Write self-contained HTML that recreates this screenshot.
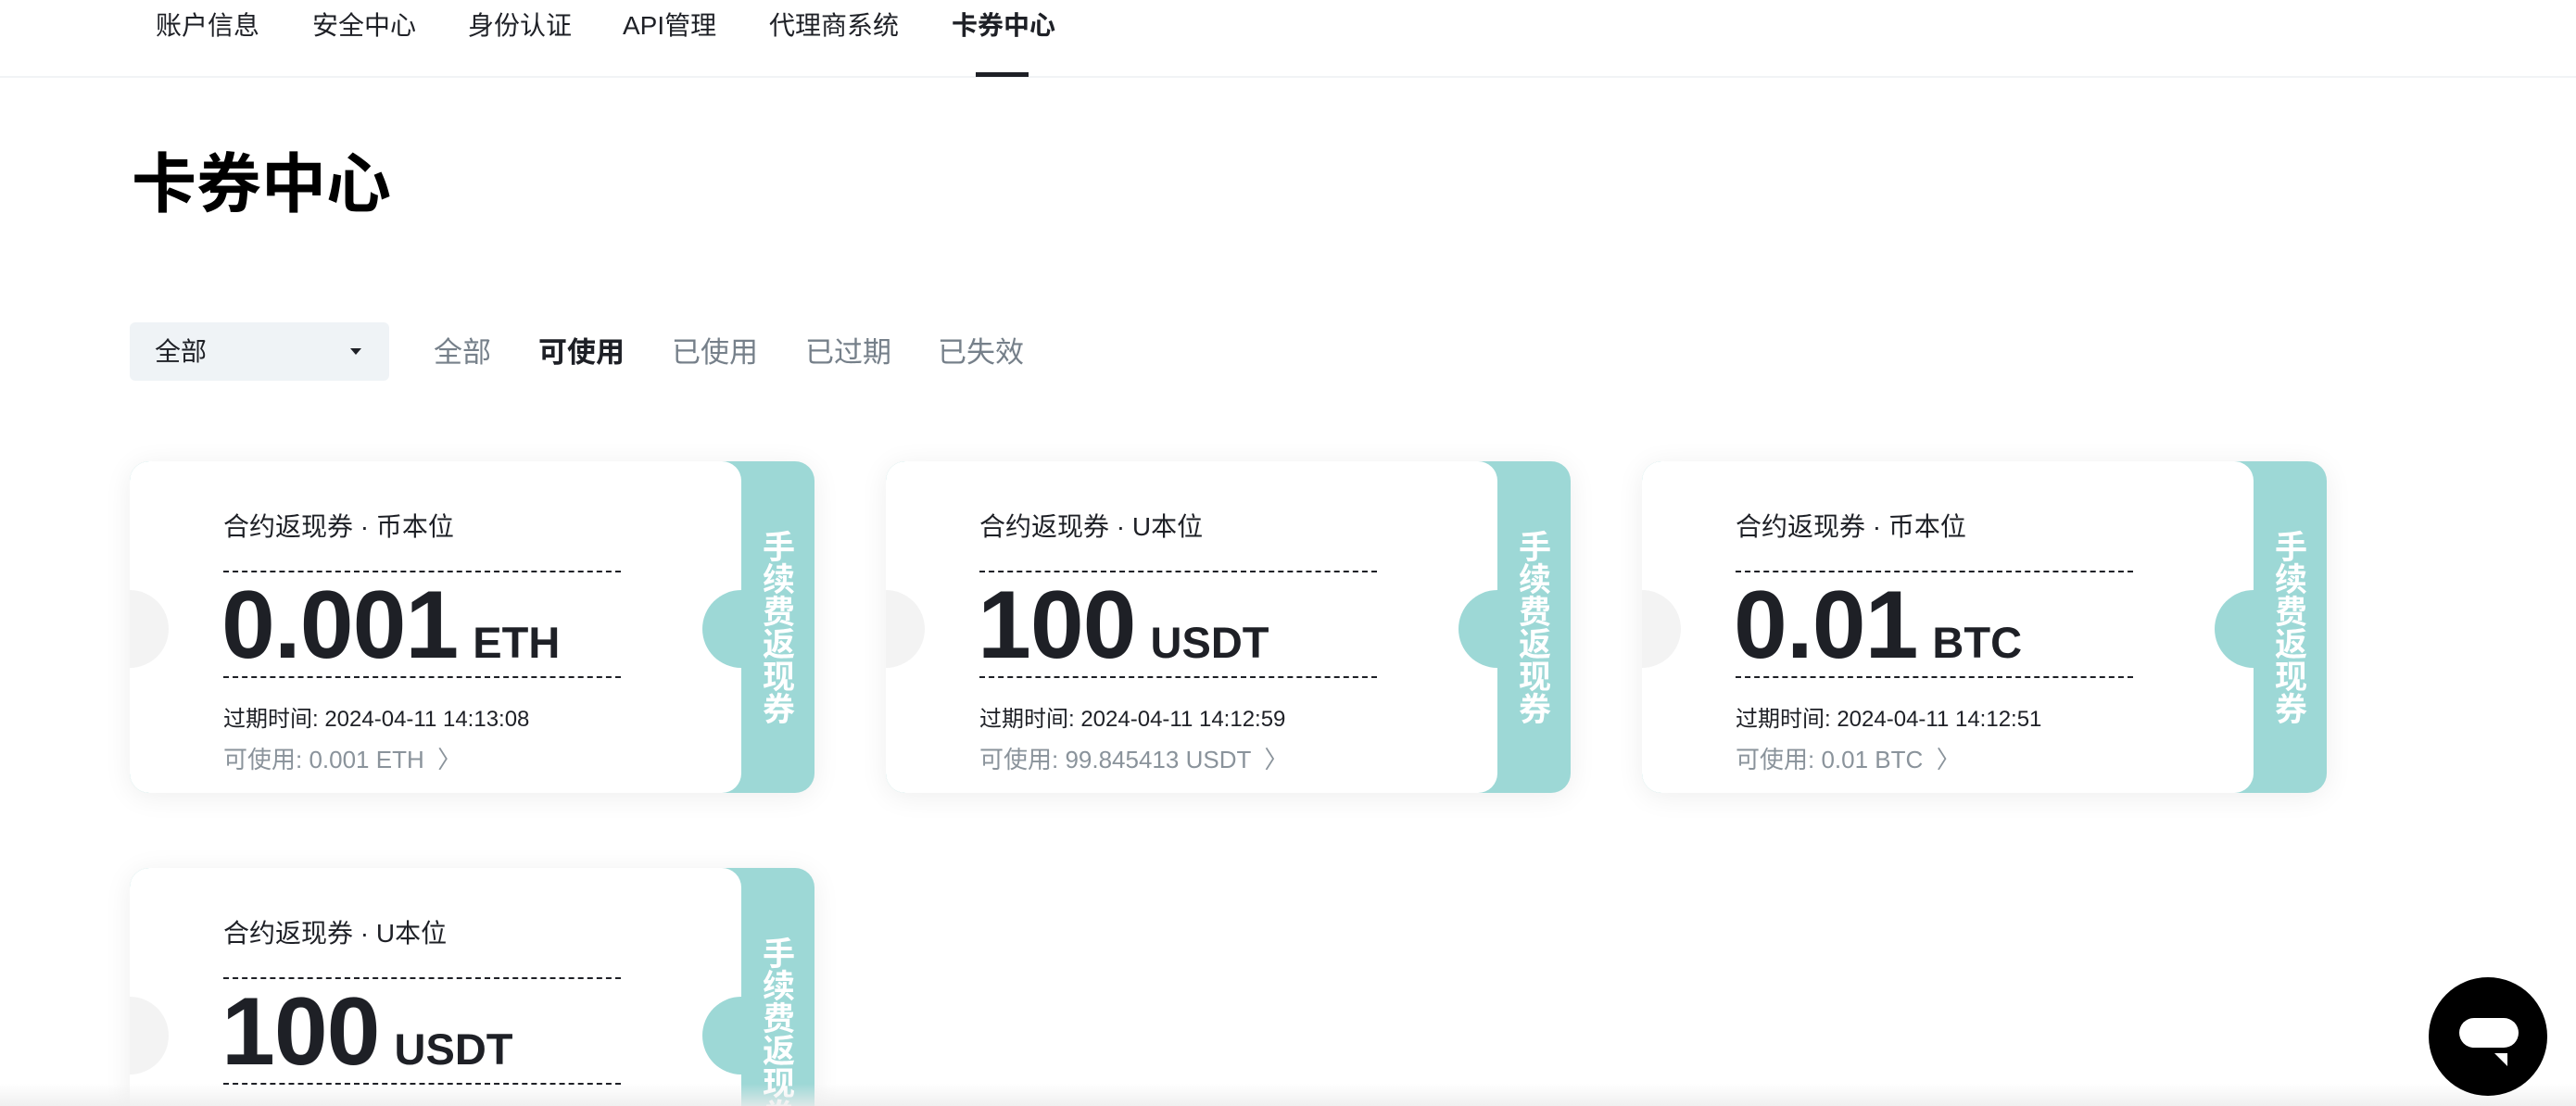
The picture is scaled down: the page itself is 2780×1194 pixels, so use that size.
<!DOCTYPE html>
<html style="width:2780px;height:1194px;overflow:hidden"><head><meta charset="utf-8"><style>
*{margin:0;padding:0;box-sizing:border-box}
body{width:2780px;height:1194px;overflow:hidden;background:#fff;font-family:"Liberation Sans","Noto Sans CJK SC",sans-serif;color:#1e2026;position:relative}
.nav{position:absolute;top:0;left:0;width:2780px;height:84px;border-bottom:2px solid #f1f3f5}
.nav span{position:absolute;top:10px;font-size:28px;line-height:36px;color:#1e2026}
.ul{position:absolute;left:1053px;top:78px;width:57px;height:5px;background:#1e2026}
h1{position:absolute;left:142px;top:157px;font-size:70px;font-weight:bold;line-height:84px;color:#000}
.sel{position:absolute;left:140px;top:348px;width:280px;height:63px;background:#eff3f6;border-radius:6px}
.sel span{position:absolute;left:27px;top:14px;font-size:28px;line-height:36px}
.sel i{position:absolute;left:238px;top:28px;border-left:6px solid transparent;border-right:6px solid transparent;border-top:7px solid #1e2026}
.tab{position:absolute;top:361px;font-size:31px;line-height:40px;color:#76808a}
.card{position:absolute;width:739px;height:358px;border-radius:21px;background:#9dd8d6;box-shadow:0 4px 30px rgba(0,0,0,.07);overflow:hidden}
.w{position:absolute;left:0;top:0;width:660px;height:358px;background:#fff;border-radius:21px}
.nl{position:absolute;left:-42px;top:139px;width:84px;height:84px;border-radius:50%;background:#f3f3f3}
.nr{position:absolute;left:618px;top:139px;width:84px;height:84px;border-radius:50%;background:#9dd8d6}
.t{position:absolute;left:101px;top:53px;font-size:28px;line-height:36px}
.d{position:absolute;left:101px;width:429px;border-top:2px dashed #1e2026}
.num{position:absolute;left:99px;top:117px;height:120px;display:flex;align-items:baseline;white-space:nowrap;font-weight:bold}
.num b{font-size:104px;line-height:120px;letter-spacing:-1px}
.num em{font-style:normal;font-size:47px;margin-left:16px}
.e{position:absolute;left:101px;top:264px;font-size:24px;line-height:30px}
.a{position:absolute;left:101px;top:306px;font-size:26px;line-height:32px;color:#8a939b}
.v{position:absolute;left:678px;top:74px;height:230px;white-space:nowrap;writing-mode:vertical-rl;font-size:35px;font-weight:bold;color:#fff;line-height:38px}
.chat{position:absolute;left:2621px;top:1055px;width:128px;height:128px;border-radius:50%;background:#000}
.chat .b{position:absolute;left:33px;top:44px;width:64px;height:32px;border-radius:16px;background:#fff}
.chat .tr{position:absolute;left:71px;top:82px;border-left:14px solid transparent;border-top:14px solid #fff}
.bot{position:absolute;left:0;top:1170px;width:2780px;height:24px;background:linear-gradient(rgba(240,240,240,0),rgba(236,236,236,.8))}
</style></head><body>
<div class="nav">
<span style="left:168px">账户信息</span>
<span style="left:337px">安全中心</span>
<span style="left:505px">身份认证</span>
<span style="left:672px">API管理</span>
<span style="left:830px">代理商系统</span>
<span style="left:1027px;font-weight:bold">卡券中心</span>
<div class="ul"></div>
</div>
<h1>卡券中心</h1>
<div class="sel"><span>全部</span><i></i></div>
<div class="tab" style="left:468px">全部</div>
<div class="tab" style="left:581px;color:#1e2026;font-weight:bold">可使用</div>
<div class="tab" style="left:725px">已使用</div>
<div class="tab" style="left:869px">已过期</div>
<div class="tab" style="left:1012px">已失效</div>

<div class="card" style="left:140px;top:498px"><div class="w"></div><div class="nl"></div><div class="nr"></div>
<div class="t">合约返现券 · 币本位</div><div class="d" style="top:118px"></div>
<div class="num"><b>0.001</b><em>ETH</em></div><div class="d" style="top:232px"></div>
<div class="e">过期时间: 2024-04-11 14:13:08</div><div class="a">可使用: 0.001 ETH &nbsp;〉</div>
<div class="v">手续费返现券</div></div>

<div class="card" style="left:956px;top:498px"><div class="w"></div><div class="nl"></div><div class="nr"></div>
<div class="t">合约返现券 · U本位</div><div class="d" style="top:118px"></div>
<div class="num"><b>100</b><em>USDT</em></div><div class="d" style="top:232px"></div>
<div class="e">过期时间: 2024-04-11 14:12:59</div><div class="a">可使用: 99.845413 USDT &nbsp;〉</div>
<div class="v">手续费返现券</div></div>

<div class="card" style="left:1772px;top:498px"><div class="w"></div><div class="nl"></div><div class="nr"></div>
<div class="t">合约返现券 · 币本位</div><div class="d" style="top:118px"></div>
<div class="num"><b>0.01</b><em>BTC</em></div><div class="d" style="top:232px"></div>
<div class="e">过期时间: 2024-04-11 14:12:51</div><div class="a">可使用: 0.01 BTC &nbsp;〉</div>
<div class="v">手续费返现券</div></div>

<div class="card" style="left:140px;top:937px;height:257px;border-bottom-left-radius:0;border-bottom-right-radius:0"><div class="w"></div><div class="nl"></div><div class="nr"></div>
<div class="t">合约返现券 · U本位</div><div class="d" style="top:118px"></div>
<div class="num"><b>100</b><em>USDT</em></div><div class="d" style="top:232px"></div>
<div class="v">手续费返现券</div></div>

<div class="bot"></div>
<div class="chat"><div class="b"></div><div class="tr"></div></div>
</body></html>
